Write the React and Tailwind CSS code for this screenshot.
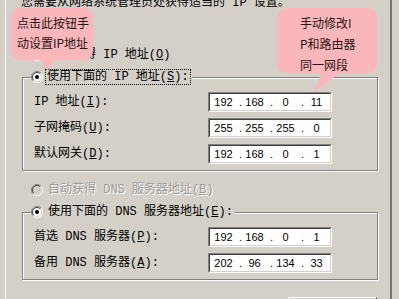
import React from "react"

function Radio({ checked, disabled }) {
    return (
        <svg width="12" height="12" viewBox="0 0 12 12" className="shrink-0">
            <circle cx="6" cy="6" r="5" fill={disabled ? "#d4d0c8" : "#ffffff"} />
            <path d="M2.1 9.9 A5.5 5.5 0 0 1 9.9 2.1" fill="none" stroke="#808080" strokeWidth="1" />
            <path d="M9.9 2.1 A5.5 5.5 0 0 1 2.1 9.9" fill="none" stroke="#ffffff" strokeWidth="1" />
            <path d="M2.8 9.2 A4.5 4.5 0 0 1 9.2 2.8" fill="none" stroke="#404040" strokeWidth="1" />
            <path d="M9.2 2.8 A4.5 4.5 0 0 1 2.8 9.2" fill="none" stroke="#d4d0c8" strokeWidth="1" />
            {checked && <circle cx="6" cy="6" r="2" fill={disabled ? "#808080" : "#000000"} />}
        </svg>
    )
}

function IpBox({ parts }) {
    return (
        <div className="w-[124px] h-[20px] border border-t-[#808080] border-l-[#808080] border-b-white border-r-white">
            <div className="h-full border border-t-[#404040] border-l-[#404040] border-b-[#d4d0c8] border-r-[#d4d0c8] bg-white flex items-center pl-[1px] font-[family-name:'Liberation_Sans',sans-serif] text-[11px] text-black">
                {parts.map((p, i) => (
                    <React.Fragment key={i}>
                        <span className="w-[25px] text-center">{p}</span>
                        {i < 3 && <span className="w-[6px] text-right">.</span>}
                    </React.Fragment>
                ))}
            </div>
        </div>
    )
}

function Row({ label, parts }) {
    return (
        <div className="flex h-[20px] items-center">
            <div className="w-[174px] leading-[14px]">{label}</div>
            <IpBox parts={parts} />
        </div>
    )
}

function Key({ k }) {
    return (
        <>
            (<span className="underline underline-offset-1">{k}</span>)
        </>
    )
}

export default function App() {
    return (
        <div className="relative w-[399px] h-[299px] overflow-hidden bg-[#d4d0c8] text-[12px] text-black font-[family-name:'Liberation_Mono','Noto_Sans_CJK_SC',monospace]">
            <div className="ml-[5px] w-[387px] h-full border-l border-l-white border-r-2 border-r-[#76746f]">
                <div className="pl-[16px] flex flex-col">
                    <div className="-mt-[4px] -ml-[1px] leading-[14px] whitespace-nowrap">
                        您需要从网络系统管理员处获得适当的 IP 设置。
                    </div>

                    <div className="mt-[37px] ml-[9px] h-[16px] flex items-center gap-[5px] whitespace-nowrap">
                        <Radio />
                        <span>
                            自动获得 IP 地址<Key k="O" />
                        </span>
                    </div>

                    <fieldset className="mt-[6px] w-[356px] border border-[#808080] shadow-[inset_1px_1px_0_#ffffff,1px_1px_0_#ffffff] pl-[11px] pt-[7px] pb-[6px]">
                        <legend className="ml-[-3px] pr-[2px] bg-[#d4d0c8] h-[16px]">
                            <div className="flex items-center h-[16px] gap-[3px] whitespace-nowrap">
                                <Radio checked />
                                <span className="outline outline-1 outline-dotted outline-black px-[1px] leading-[14px]">
                                    使用下面的 IP 地址<Key k="S" />:
                                </span>
                            </div>
                        </legend>
                        <div className="flex flex-col gap-[6px]">
                            <Row label={<>IP 地址<Key k="I" />:</>} parts={["192", "168", "0", "11"]} />
                            <Row label={<>子网掩码<Key k="U" />:</>} parts={["255", "255", "255", "0"]} />
                            <Row label={<>默认网关<Key k="D" />:</>} parts={["192", "168", "0", "1"]} />
                        </div>
                    </fieldset>

                    <div className="mt-[11px] ml-[9px] h-[16px] flex items-center gap-[5px] whitespace-nowrap">
                        <Radio disabled />
                        <span className="text-[#9c9a96] [text-shadow:1px_1px_0_#ffffff]">
                            自动获得 DNS 服务器地址<Key k="B" />
                        </span>
                    </div>

                    <fieldset className="mt-[6px] w-[356px] border border-[#808080] shadow-[inset_1px_1px_0_#ffffff,1px_1px_0_#ffffff] pl-[11px] pt-[7px] pb-[6px]">
                        <legend className="ml-[-3px] pr-[2px] bg-[#d4d0c8] h-[16px]">
                            <div className="flex items-center h-[16px] gap-[5px] whitespace-nowrap">
                                <Radio checked />
                                <span className="leading-[14px]">
                                    使用下面的 DNS 服务器地址<Key k="E" />:
                                </span>
                            </div>
                        </legend>
                        <div className="flex flex-col gap-[6px]">
                            <Row label={<>首选 DNS 服务器<Key k="P" />:</>} parts={["192", "168", "0", "1"]} />
                            <Row label={<>备用 DNS 服务器<Key k="A" />:</>} parts={["202", "96", "134", "33"]} />
                        </div>
                    </fieldset>

                    <div className="mt-[17px] ml-[266px] w-[89px] h-[24px] border-t border-l border-white border-r border-b border-r-[#404040] border-b-[#404040]"></div>
                </div>
            </div>

            {/* callouts */}
            <div className="absolute left-[11px] top-[8px] w-[82px] h-[52px] rounded-[9px] bg-[#f9b7bb] pl-[6px] pt-[5px] leading-[20px] text-[#2a1414] font-[family-name:'Noto_Sans_CJK_SC',sans-serif] whitespace-nowrap">
                点击此按钮手
                <br />
                动设置IP地址
            </div>
            <svg className="absolute left-0 top-0" width="399" height="299" viewBox="0 0 399 299">
                <polygon points="40,58 56,58 46,70" fill="#f9b7bb" />
                <polygon points="322,71 342,71 314,92" fill="#f9b7bb" />
            </svg>
            <div className="absolute left-[277px] top-[8px] w-[100px] h-[65px] rounded-[10px] bg-[#f9b7bb] pl-[23px] pt-[4px] leading-[21px] text-[#2a1414] font-[family-name:'Noto_Sans_CJK_SC',sans-serif] whitespace-nowrap">
                手动修改I
                <br />
                P和路由器
                <br />
                同一网段
            </div>
        </div>
    )
}
